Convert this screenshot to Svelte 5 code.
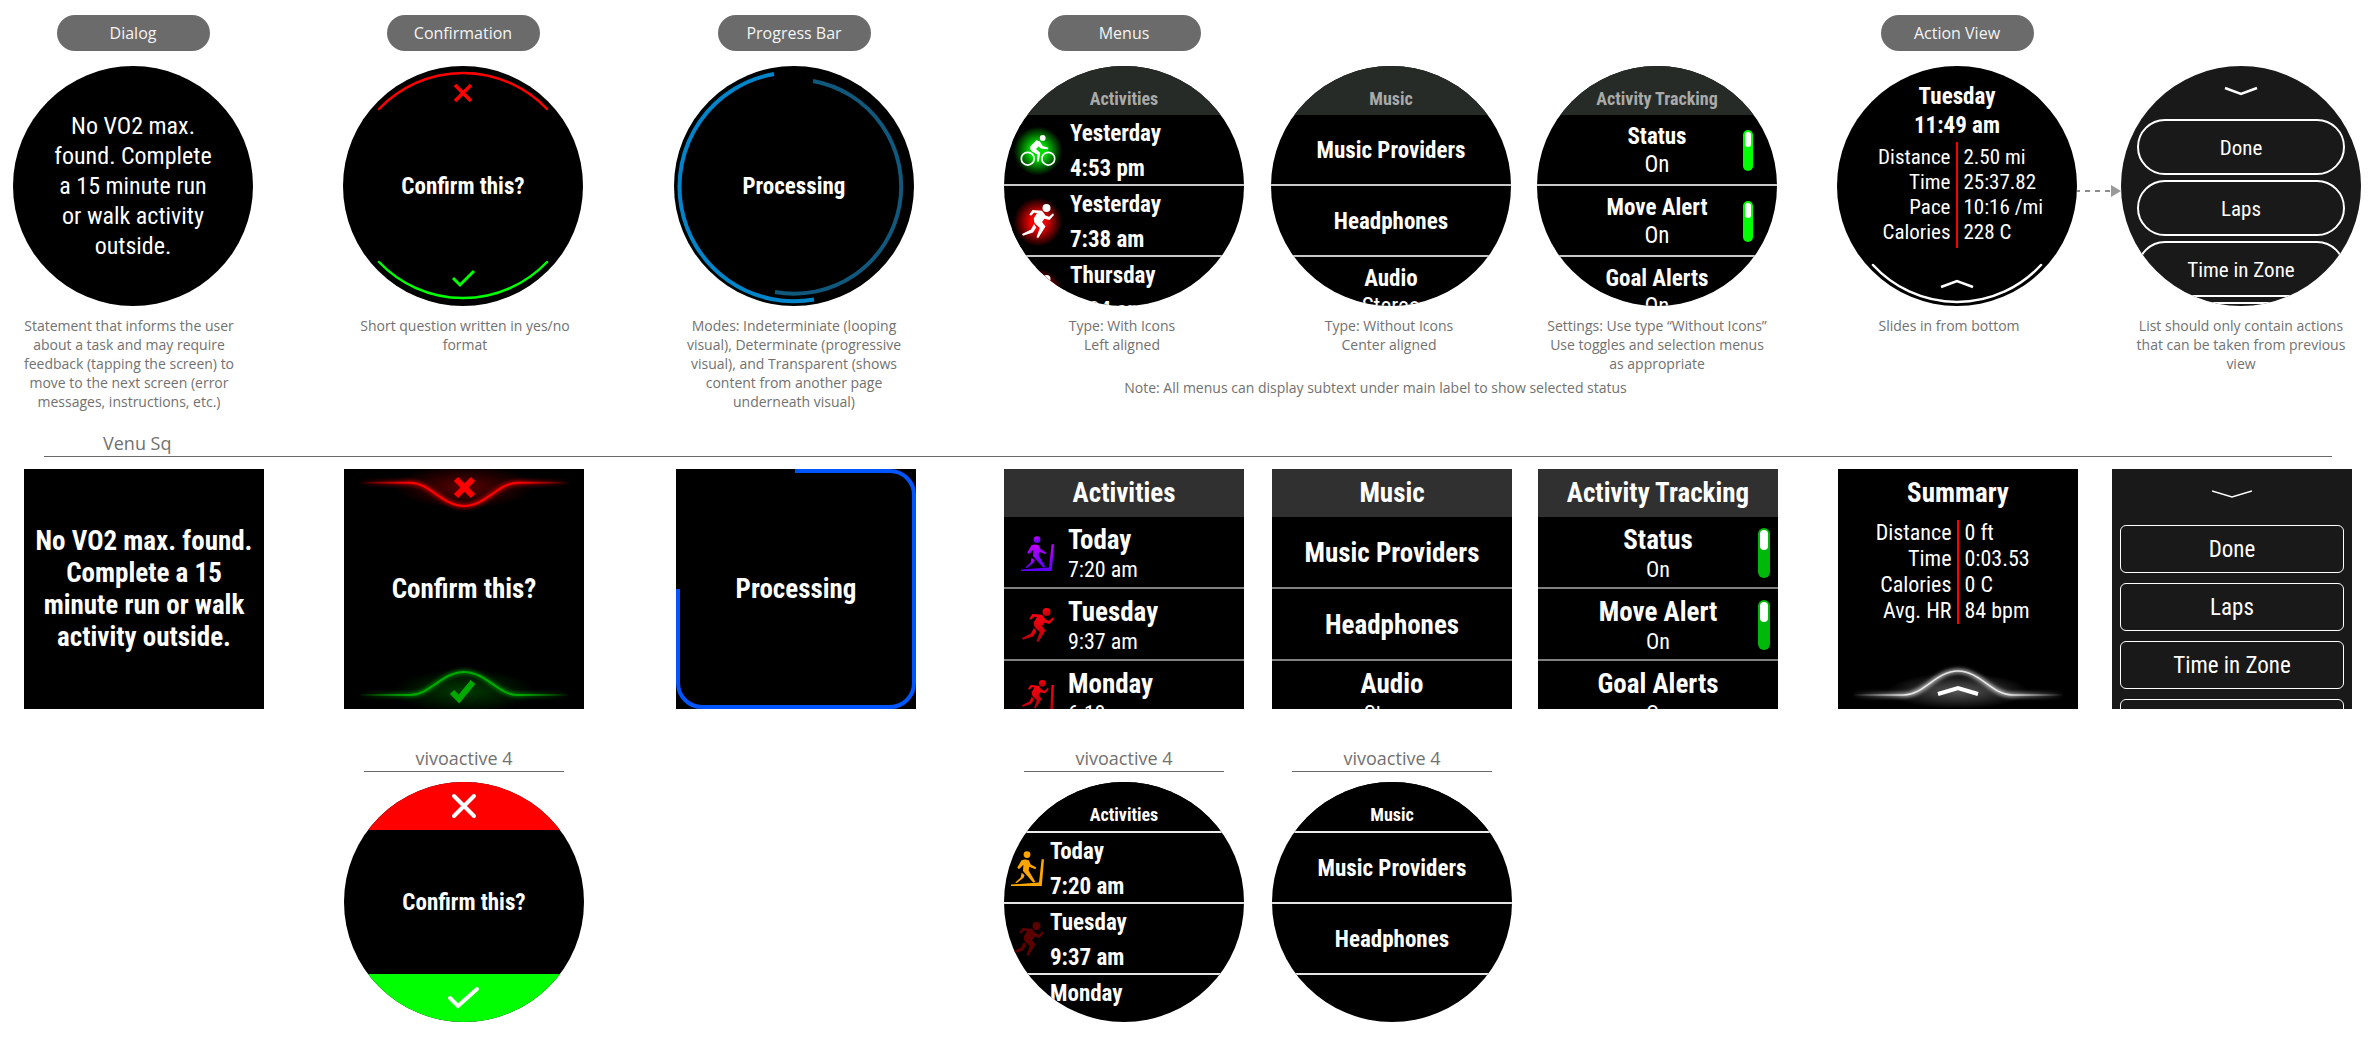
<script>
  const activities = [
    { title: 'Yesterday', sub: '4:53 pm', icon: 'bike' },
    { title: 'Yesterday', sub: '7:38 am', icon: 'run' },
    { title: 'Thursday', sub: '6:24 am', icon: 'run' }
  ];
  const sqActivities = [
    { title: 'Today', sub: '7:20 am', icon: 'treadmill' },
    { title: 'Tuesday', sub: '9:37 am', icon: 'run' },
    { title: 'Monday', sub: '6:19 am', icon: 'incline' }
  ];
  const vivoActivities = [
    { title: 'Today', sub: '7:20 am', icon: 'treadmill' },
    { title: 'Tuesday', sub: '9:37 am', icon: 'run' },
    { title: 'Monday', sub: '6:19 am', icon: 'run' }
  ];
  const music = [{ title: 'Music Providers' }, { title: 'Headphones' }, { title: 'Audio', sub: 'Stereo' }];
  const tracking = [
    { title: 'Status', sub: 'On', toggle: true },
    { title: 'Move Alert', sub: 'On', toggle: true },
    { title: 'Goal Alerts', sub: 'On' }
  ];
  const roundStats = [['Distance', '2.50 mi'], ['Time', '25:37.82'], ['Pace', '10:16 /mi'], ['Calories', '228 C']];
  const sqStats = [['Distance', '0 ft'], ['Time', '0:03.53'], ['Calories', '0 C'], ['Avg. HR', '84 bpm']];
  const actions = ['Done', 'Laps', 'Time in Zone', 'Settings'];
</script>

{#snippet runner()}
  <circle cx="25.5" cy="4" r="4" />
  <path d="M11.5 6L21 6.8L24.5 11.5L28 12.8L32 9.3L33 11L28.5 16L23.5 14.7L21 18L24.5 22.5L17.3 34L15.5 33.3L18.8 24L13.5 19L12.7 14.5L16 9L13 8.7L10 11.7L8.3 10.5Z" />
  <path d="M13 20L10 25.5L1 30L2 31.7L12 28.5L15.3 23.5Z" />
{/snippet}

{#snippet icon(name)}
  <span class="icon {name}">
    {#if name === 'bike'}
      <svg viewBox="0 0 36 31" width="36" height="31" aria-hidden="true">
        <circle cx="22.7" cy="3" r="2.9" />
        <circle class="wheel" cx="7.7" cy="23.7" r="6.4" />
        <circle class="wheel" cx="28.3" cy="23.7" r="6.4" />
        <path d="M10.3 11.6L16.3 5.3L19.7 6.3L22.8 11L28.3 12.7L28 14.2L21.3 13.7L18.6 11.6L16 14L20.2 17.7L18.8 26.5H17.3L17.2 19.6L11.6 16.2Q9.6 14 10.3 11.6Z" />
      </svg>
    {:else if name === 'run'}
      <svg viewBox="0 0 34 35" width="34" height="35" aria-hidden="true">{@render runner()}</svg>
    {:else if name === 'incline'}
      <svg viewBox="0 0 34 35" width="34" height="35" aria-hidden="true">
        <g transform="scale(0.84)">{@render runner()}</g>
        <path d="M30.5 5H33L31.5 35H29Z" />
      </svg>
    {:else}
      <svg viewBox="0 0 34 35" width="34" height="35" aria-hidden="true">
        <circle cx="16" cy="3.6" r="3.4" />
        <path d="M10.5 9.3Q14 7.8 17.7 9.3L19.8 13.6L25.3 16.6L24.4 18.2L18.2 15.8L17.7 19.5L24.4 31L22.2 31.5L12 20L12.4 13.8L8 18.2L6.3 16.4Z" />
        <path d="M10.6 21.8L9.7 26.4L4.2 31.6L5.8 32L12.6 26.8L13.6 24.2Z" />
        <path d="M0 33.5L28 31.6L30.6 8.3H33L30.8 35H0Z" />
      </svg>
    {/if}
  </span>
{/snippet}

{#snippet menu(heading, items)}
  <h3 class="heading">{heading}</h3>
  {#each items as item}
    {#if item.toggle}
      <label class="item">
        <span class="lines"><b>{item.title}</b><span class="sub">{item.sub}</span></span>
        <input class="toggle" type="checkbox" role="switch" checked />
      </label>
    {:else}
      <button class="item">
        {#if item.icon}{@render icon(item.icon)}{/if}
        <span class="lines"><b>{item.title}</b>{#if item.sub}<span class="sub">{item.sub}</span>{/if}</span>
      </button>
    {/if}
  {/each}
{/snippet}

{#snippet stats(rows)}
  <table class="stats">
    <tbody>
      {#each rows as [name, value]}
        <tr><th scope="row">{name}</th><td>{value}</td></tr>
      {/each}
    </tbody>
  </table>
{/snippet}

{#snippet vivo()}
  <h2 class="model">vivoactive 4</h2>
{/snippet}

<svg class="defs" width="0" height="0" aria-hidden="true">
  <defs>
    <linearGradient id="violet" x1="0" y1="0" x2="0" y2="1"><stop offset="0" stop-color="#c300ff" /><stop offset="1" stop-color="#5a00ff" /></linearGradient>
    <linearGradient id="crimson" x1="0" y1="0" x2="0" y2="1"><stop offset="0" stop-color="#ff0010" /><stop offset="1" stop-color="#b0000c" /></linearGradient>
    {#each [['red', '#ff0000'], ['green', '#00a800'], ['white', '#ffffff']] as [id, color]}
      <linearGradient id="fade-{id}" gradientUnits="userSpaceOnUse" x1="14" y1="0" x2="226" y2="0">
        <stop offset="0" stop-color={color} stop-opacity="0" />
        <stop offset="0.25" stop-color={color} />
        <stop offset="0.75" stop-color={color} />
        <stop offset="1" stop-color={color} stop-opacity="0" />
      </linearGradient>
      <radialGradient id="haze-{id}" cx="0.5" cy="0.5" r="0.5">
        <stop offset="0" stop-color={color} stop-opacity="0.35" />
        <stop offset="1" stop-color={color} stop-opacity="0" />
      </radialGradient>
    {/each}
    <filter id="soft" x="-10%" y="-60%" width="120%" height="220%"><feGaussianBlur stdDeviation="2" /></filter>
  </defs>
</svg>

<main>
  <section class="board round-row">
    <h2 class="pill c1">Dialog</h2>
    <h2 class="pill c2">Confirmation</h2>
    <h2 class="pill c3">Progress Bar</h2>
    <h2 class="pill c4">Menus</h2>
    <h2 class="pill c7">Action View</h2>

    <div class="screen round center c1"><p class="message">No VO2 max. found. Complete a 15 minute run or walk activity outside.</p></div>

    <div class="screen round confirm c2">
      <button aria-label="No">
        <svg viewBox="0 0 240 48" width="240" height="48">
          <path d="M36 43A116 116 0 0 1 204 43" stroke="#f00" stroke-width="2.500" stroke-linecap="round" />
          <path d="M112 19L128 35M128 19L112 35" stroke="#f00" stroke-width="3.500" />
        </svg>
      </button>
      <p class="strong">Confirm this?</p>
      <button aria-label="Yes">
        <svg viewBox="0 0 240 48" width="240" height="48">
          <path d="M36 4A116 116 0 0 0 204 4" stroke="#0f0" stroke-width="2.500" stroke-linecap="round" />
          <path d="M110 20L117 27L131 13" stroke="#0f0" stroke-width="3" />
        </svg>
      </button>
    </div>

    <div class="screen round center c3">
      <svg class="ring" viewBox="0 0 240 240" aria-hidden="true">
        <path d="M100 8A114.500 114.500 0 1 0 140 233.500" stroke="#0085ca" stroke-width="4" />
        <path d="M139 15A107 107 0 1 1 101 226" stroke="#10587c" stroke-width="4" />
      </svg>
      <p class="strong">Processing</p>
    </div>

    <div class="screen round menu left c4">{@render menu('Activities', activities)}</div>
    <div class="screen round menu c5">{@render menu('Music', music)}</div>
    <div class="screen round menu c6">{@render menu('Activity Tracking', tracking)}</div>

    <div class="screen round summary c7">
      <h3>Tuesday<br />11:49 am</h3>
      {@render stats(roundStats)}
      <svg class="ring" viewBox="0 0 240 240" aria-hidden="true">
        <path d="M36 199A114 114 0 0 0 204 199" stroke="#fff" stroke-width="2.500" stroke-linecap="round" />
        <path d="M104 221L120 215L136 221" stroke="#fff" stroke-width="2.500" />
      </svg>
    </div>
    <svg class="arrow" viewBox="0 0 44 12" width="44" height="12" aria-hidden="true">
      <path d="M0 6H34" stroke="#8c8c8c" stroke-width="2" stroke-dasharray="5 5" stroke-dashoffset="2" />
      <path d="M34 0L44 6L34 12Z" fill="#999" />
    </svg>
    <div class="screen round actions c8">
      <svg viewBox="0 0 40 10" width="40" height="10" aria-hidden="true"><path d="M4 2L20 8L36 2" stroke="#fff" stroke-width="2.500" /></svg>
      {#each actions as action}<button>{action}</button>{/each}
    </div>

    <p class="caption c1">Statement that informs the user about a task and may require feedback (tapping the screen) to move to the next screen (error messages, instructions, etc.)</p>
    <p class="caption c2">Short question written in yes/no format</p>
    <p class="caption c3">Modes: Indeterminiate (looping visual), Determinate (progressive visual), and Transparent (shows content from another page underneath visual)</p>
    <p class="caption c4">Type: With Icons<br />Left aligned</p>
    <p class="caption c5">Type: Without Icons<br />Center aligned</p>
    <p class="caption c6">Settings: Use type “Without Icons” Use toggles and selection menus as appropriate</p>
    <p class="caption c7">Slides in from bottom</p>
    <p class="caption c8">List should only contain actions that can be taken from previous view</p>
    <p class="note">Note: All menus can display subtext under main label to show selected status</p>
  </section>

  <h2 class="divider">Venu Sq</h2>

  <section class="board sq-row">
    <div class="screen sq center c1"><p class="strong">No VO2 max. found. Complete a 15 minute run or walk activity outside.</p></div>

    <div class="screen sq confirm c2">
      <button aria-label="No">
        <svg viewBox="0 0 240 48" width="240" height="48">
          <ellipse cx="120" cy="18" rx="70" ry="22" fill="url(#haze-red)" />
          <path d="M16 13.700H66C86 13.700 98 37 120 37S154 13.700 174 13.700H224" stroke="url(#fade-red)" stroke-width="3" filter="url(#soft)" />
          <path d="M16 13.700H66C86 13.700 98 37 120 37S154 13.700 174 13.700H224" stroke="url(#fade-red)" stroke-width="2" />
          <path d="M112 10L129 27M129 10L112 27" stroke="#f00" stroke-width="6" />
        </svg>
      </button>
      <p class="strong">Confirm this?</p>
      <button aria-label="Yes">
        <svg viewBox="0 0 240 48" width="240" height="48">
          <ellipse cx="120" cy="30" rx="70" ry="22" fill="url(#haze-green)" />
          <path d="M16 34H66C86 34 98 11 120 11S154 34 174 34H224" stroke="url(#fade-green)" stroke-width="3" filter="url(#soft)" />
          <path d="M16 34H66C86 34 98 11 120 11S154 34 174 34H224" stroke="url(#fade-green)" stroke-width="2" />
          <path d="M108 31L115 38L129 21" stroke="#00a800" stroke-width="6" />
        </svg>
      </button>
    </div>

    <div class="screen sq center c3">
      <svg class="ring" viewBox="0 0 240 240" aria-hidden="true">
        <path d="M119 2H214A24 24 0 0 1 238 26V214A24 24 0 0 1 214 238H26A24 24 0 0 1 2 214V120" stroke="#0055ff" stroke-width="4" />
      </svg>
      <p class="strong">Processing</p>
    </div>

    <div class="screen sq menu left c4">{@render menu('Activities', sqActivities)}</div>
    <div class="screen sq menu c5">{@render menu('Music', music)}</div>
    <div class="screen sq menu c6">{@render menu('Activity Tracking', tracking)}</div>

    <div class="screen sq summary c7">
      <h3>Summary</h3>
      {@render stats(sqStats)}
      <svg class="ring" viewBox="0 0 240 240" aria-hidden="true">
        <ellipse cx="120" cy="222" rx="70" ry="18" fill="url(#haze-white)" />
        <path d="M16 226H66C86 226 98 202 120 202S154 226 174 226H224" stroke="url(#fade-white)" stroke-width="3" filter="url(#soft)" />
        <path d="M16 226H66C86 226 98 202 120 202S154 226 174 226H224" stroke="url(#fade-white)" stroke-width="1.500" opacity="0.8" />
        <path d="M100 225L120 219L140 225" stroke="#fff" stroke-width="4" />
      </svg>
    </div>
    <div class="screen sq actions c8">
      <svg viewBox="0 0 40 10" width="40" height="10" aria-hidden="true"><path d="M0 2L20 8L40 2" stroke="#fff" stroke-width="1.500" /></svg>
      {#each actions as action}<button>{action}</button>{/each}
    </div>
  </section>

  <section class="board sq-row vivo-row">
    <div class="c2">
      {@render vivo()}
      <div class="screen round confirm solid">
        <button class="no" aria-label="No">
          <svg viewBox="0 0 240 48" width="240" height="48"><path d="M110 14L130 34M130 14L110 34" stroke="#fff" stroke-width="4" stroke-linecap="round" /></svg>
        </button>
        <p class="strong">Confirm this?</p>
        <button class="yes" aria-label="Yes">
          <svg viewBox="0 0 240 48" width="240" height="48"><path d="M106 24L114 32L133 15" stroke="#fff" stroke-width="4" stroke-linecap="round" /></svg>
        </button>
      </div>
    </div>
    <div class="c4">
      {@render vivo()}
      <div class="screen round menu left vivo">{@render menu('Activities', vivoActivities)}</div>
    </div>
    <div class="c5">
      {@render vivo()}
      <div class="screen round menu vivo">{@render menu('Music', music.slice(0, 2))}</div>
    </div>
  </section>
</main>

<style>
  :global(body) {
    background: #fff;
  }
  main {
    padding-top: 15px;
    font-family: 'Open Sans', sans-serif;
    color: #717171;
  }
  h2, h3, p {
    margin: 0;
    font-weight: 400;
  }
  .defs {
    position: absolute;
  }
  svg {
    display: block;
    fill: none;
  }

  .board {
    display: grid;
    justify-items: center;
  }
  .round-row {
    grid-template-columns: 13fr 240px 90fr 240px 91fr 240px 90fr 240px 27fr 240px 26fr 240px 60fr 240px 44fr 240px 15fr;
    grid-template-rows: 36px 240px 48px auto;
    row-gap: 15px;
  }
  .sq-row {
    grid-template-columns: 24fr 240px 80fr 240px 92fr 240px 88fr 240px 28fr 240px 26fr 240px 60fr 240px 34fr 240px 24fr;
  }
  .c1 { grid-column: 2; }
  .c2 { grid-column: 4; }
  .c3 { grid-column: 6; }
  .c4 { grid-column: 8; }
  .c5 { grid-column: 10; }
  .c6 { grid-column: 12; }
  .c7 { grid-column: 14; }
  .c8 { grid-column: 16; }

  .pill {
    grid-row: 1;
    box-sizing: border-box;
    width: 153px;
    border-radius: 18px;
    background: #6b6b6b;
    color: #f4f4f4;
    font-size: 16px;
    line-height: 36px;
    text-align: center;
  }
  .round-row > .screen {
    grid-row: 2;
  }
  .caption {
    grid-row: 3 / 5;
    margin-top: -5px;
    max-width: 220px;
    font-size: 14px;
    line-height: 19px;
    text-align: center;
  }
  .caption.c1 {
    padding-right: 8px;
  }
  .caption.c2 {
    padding-left: 4px;
  }
  .caption.c7 {
    padding-right: 16px;
  }
  .caption.c4, .caption.c5 {
    padding-right: 4px;
  }
  .note {
    grid-column: 8 / 13;
    grid-row: 4;
    margin-top: -6px;
    padding-right: 30px;
    font-size: 14px;
    line-height: 19px;
  }
  .arrow {
    grid-column: 15;
    grid-row: 2;
    align-self: center;
    justify-self: end;
    padding-top: 10px;
  }

  .divider {
    margin: 20px 44px 12px;
    padding-left: 59px;
    border-bottom: 1px solid #6a6a6a;
    font-size: 18px;
    line-height: 25px;
  }
  .vivo-row {
    padding-top: 36px;
  }
  .model {
    width: 200px;
    margin: 0 auto 10px;
    border-bottom: 1px solid #6a6a6a;
    font-size: 18px;
    line-height: 26px;
    text-align: center;
  }

  .screen {
    position: relative;
    box-sizing: border-box;
    width: 240px;
    height: 240px;
    overflow: hidden;
    background: #000;
    color: #fff;
    font-family: 'Roboto Condensed', 'Roboto', sans-serif;
    font-size: 23px;
    line-height: 30px;
    text-align: center;
  }
  .round {
    border-radius: 50%;
  }
  .sq {
    font-size: 27px;
    line-height: 32px;
  }
  .center {
    display: flex;
    align-items: center;
    justify-content: center;
  }
  .message {
    width: 170px;
    font-size: 24px;
  }
  .sq .strong {
    max-width: 224px;
  }
  .strong, .screen h3, .screen b {
    font-weight: 700;
  }
  .round .strong {
    padding-top: 2px;
  }
  .screen h3 {
    font-size: inherit;
  }
  .ring {
    position: absolute;
    inset: 0;
    width: 100%;
    height: 100%;
  }
  button {
    padding: 0;
    border: 0;
    background: none;
    color: inherit;
    font: inherit;
  }

  .confirm {
    display: flex;
    flex-direction: column;
    align-items: center;
    justify-content: space-between;
  }
  .no {
    background: #f00;
  }
  .yes {
    background: #0f0;
  }

  .menu .heading {
    box-sizing: border-box;
    height: 49px;
    padding-top: 18px;
    background: #272b28;
    color: #a9aaa8;
    font-size: 18px;
    line-height: 30px;
  }
  .item {
    display: flex;
    align-items: center;
    justify-content: center;
    position: relative;
    box-sizing: border-box;
    width: 100%;
    height: 71px;
    padding-top: 2px;
    border-bottom: 2px solid #c8c8c8;
    line-height: 28px;
  }
  .lines {
    display: flex;
    flex-direction: column;
  }
  .left .item {
    justify-content: flex-start;
    gap: 6px;
    padding-left: 8px;
    line-height: 35px;
    text-align: left;
  }
  .left .sub {
    font-weight: 700;
  }
  .icon {
    display: grid;
    place-items: center;
    width: 52px;
    height: 52px;
    fill: #fff;
  }
  .icon svg {
    fill: inherit;
  }
  .wheel {
    fill: none;
    stroke: #fff;
    stroke-width: 1.7px;
  }
  .icon.bike {
    background: radial-gradient(circle closest-side, #0d0 30%, #000 94%);
  }
  .icon.run {
    background: radial-gradient(circle closest-side, #e00 30%, #000 94%);
  }
  .toggle {
    appearance: none;
    position: absolute;
    right: 24px;
    top: 15px;
    width: 10px;
    height: 41px;
    margin: 0;
    border-radius: 5px;
    background: #0f0;
  }
  .toggle::before {
    content: '';
    display: block;
    width: 6px;
    height: 15px;
    margin: 2px;
    border-radius: 3px;
    background: #fff;
  }

  .sq.menu .heading {
    height: 48px;
    padding-top: 8px;
    background: #303030;
    color: #fff;
    font-size: 27px;
    line-height: 32px;
  }
  .sq .item {
    height: 72px;
    border-bottom-color: #808080;
    line-height: 30px;
  }
  .sq .sub {
    font-size: 22px;
    font-weight: 400;
  }
  .sq .lines:has(.sub) {
    padding-top: 4px;
  }
  .sq.left .item {
    gap: 4px;
  }
  .sq .icon.run, .vivo .icon.run {
    background: none;
  }
  .sq .icon {
    fill: url(#crimson);
  }
  .sq .icon.treadmill {
    fill: url(#violet);
  }
  .sq .toggle {
    right: 8px;
    top: 11px;
    width: 12px;
    height: 50px;
    border-radius: 6px;
    background: #00b80a;
  }
  .sq .toggle::before {
    width: 8px;
    height: 20px;
    border-radius: 4px;
  }

  .vivo.menu .heading {
    height: 51px;
    border-bottom: 2px solid #eee;
    background: #000;
    color: #fff;
  }
  .vivo .item {
    border-bottom-color: #e4e4e4;
  }
  .vivo.left .item {
    gap: 4px;
    padding-left: 6px;
  }
  .vivo .icon {
    width: 36px;
    fill: #ffa500;
  }
  .vivo .icon.run {
    fill: #5c0000;
  }

  .summary {
    padding-top: 16px;
    line-height: 29px;
  }
  .stats {
    width: 100%;
    table-layout: fixed;
    margin-top: 2px;
    padding: 3px 0;
    border-spacing: 0;
    background: linear-gradient(#f00, #f00) center / 2px 100% no-repeat;
    font-size: 21px;
    line-height: 25px;
  }
  th, td {
    width: 50%;
    padding: 0;
    font-weight: 400;
  }
  th {
    padding-right: 7px;
    text-align: right;
  }
  td {
    padding-left: 6px;
    text-align: left;
  }
  .sq.summary {
    padding-top: 10px;
  }
  .sq .stats {
    margin-top: 12px;
    padding: 0;
    font-size: 22px;
    line-height: 26px;
  }

  .actions {
    display: flex;
    flex-direction: column;
    align-items: center;
    gap: 5px;
    padding-top: 20px;
    background: #191919;
  }
  .actions svg {
    flex: none;
    margin-bottom: 18px;
  }
  .actions button {
    box-sizing: border-box;
    flex: none;
    width: 208px;
    height: 56px;
    padding-top: 2px;
    border: 2px solid #fff;
    border-radius: 28px;
    font-size: 21px;
  }
  .sq.actions {
    gap: 10px;
  }
  .sq.actions svg {
    margin-bottom: 16px;
  }
  .sq.actions button {
    width: 224px;
    height: 48px;
    border-width: 1px;
    border-radius: 6px;
    font-size: 23px;
  }
</style>
